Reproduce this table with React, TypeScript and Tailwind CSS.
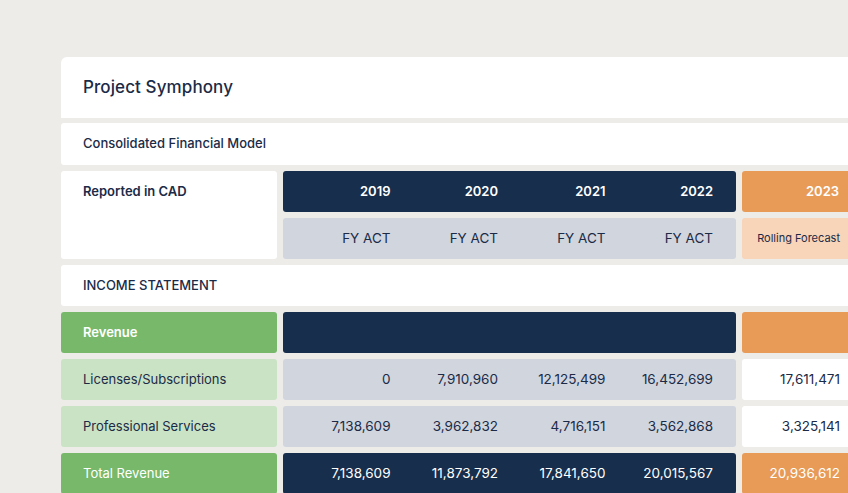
import React from "react";

const NAVY = "bg-[#172e4c]";

type Row = { label: string; kind: "head" | "item" | "total"; vals: string[]; f: string };

const rows: Row[] = [
  { label: "Revenue", kind: "head", vals: ["", "", "", ""], f: "" },
  { label: "Licenses/Subscriptions", kind: "item", vals: ["0", "7,910,960", "12,125,499", "16,452,699"], f: "17,611,471" },
  { label: "Professional Services", kind: "item", vals: ["7,138,609", "3,962,832", "4,716,151", "3,562,868"], f: "3,325,141" },
  { label: "Total Revenue", kind: "total", vals: ["7,138,609", "11,873,792", "17,841,650", "20,015,567"], f: "20,936,612" },
];

function Cols({ vals, cls }: { vals: string[]; cls: string }) {
  return (
    <div className={`w-[453px] shrink-0 rounded-[3px] grid grid-cols-4 pr-[23px] items-center ${cls}`}>
      {vals.map((v, i) => (
        <div key={i} className="text-right">{v}</div>
      ))}
    </div>
  );
}

export default function App() {
  return (
    <div
      className="w-[848px] h-[493px] overflow-hidden bg-[#edece9] text-[#1b2b47]"
      style={{ fontFamily: "Inter, 'Noto Sans', sans-serif" }}
    >
      <div className="ml-[61px] mt-[57px] w-[900px] flex flex-col">
        <div className="h-[61px] bg-white rounded-tl-[6px] flex items-center pl-[22px] pt-[1px] text-[17px] font-medium tracking-[0.1px]">
          Project Symphony
        </div>
        <div className="mt-[5px] h-[42px] bg-white rounded-[3px] flex items-center pl-[22px] text-[13px] font-medium">
          Consolidated Financial Model
        </div>
        <div className="mt-[6px] flex gap-[6px]">
          <div className="w-[216px] h-[88px] shrink-0 bg-white rounded-[3px] pl-[22px]">
            <div className="h-[41px] flex items-center text-[13px] font-semibold">Reported in CAD</div>
          </div>
          <div className="flex flex-col gap-[6px]">
            <div className="flex gap-[6px] h-[41px]">
              <Cols vals={["2019", "2020", "2021", "2022"]} cls={`${NAVY} text-white text-[13px] font-semibold`} />
              <div className="w-[120px] shrink-0 rounded-[3px] bg-[#e89a57] text-white text-[13px] font-semibold flex items-center justify-end pr-[23px]">
                2023
              </div>
            </div>
            <div className="flex gap-[6px] h-[41px]">
              <Cols vals={["FY ACT", "FY ACT", "FY ACT", "FY ACT"]} cls="bg-[#d0d5de] text-[13.5px]" />
              <div className="w-[120px] shrink-0 rounded-[3px] bg-[#f8d4b8] text-[11px] font-normal flex items-center justify-end pr-[22px]">
                Rolling Forecast
              </div>
            </div>
          </div>
        </div>
        <div className="mt-[6px] h-[41px] bg-white rounded-[3px] flex items-center pl-[22px] text-[13px] font-medium">
          INCOME STATEMENT
        </div>
        <div className="mt-[6px] flex flex-col gap-[6px]">
          {rows.map((r) => {
            const strong = r.kind !== "item";
            return (
              <div key={r.label} className="flex gap-[6px] h-[41px]">
                <div
                  className={`w-[216px] shrink-0 rounded-[3px] flex items-center pl-[22px] text-[13px] ${
                    strong ? "bg-[#77b86b] text-white" : "bg-[#c9e3c4]"
                  } ${r.kind === "head" ? "font-semibold" : ""}`}
                >
                  {r.label}
                </div>
                <Cols
                  vals={r.vals}
                  cls={`text-[13.5px] ${strong ? `${NAVY} text-white` : "bg-[#d0d5de]"}`}
                />
                <div
                  className={`w-[120px] shrink-0 rounded-[3px] flex items-center justify-end pr-[22px] text-[13.5px] ${
                    strong ? "bg-[#e89a57] text-white" : "bg-white"
                  }`}
                >
                  {r.f}
                </div>
              </div>
            );
          })}
        </div>
      </div>
    </div>
  );
}
